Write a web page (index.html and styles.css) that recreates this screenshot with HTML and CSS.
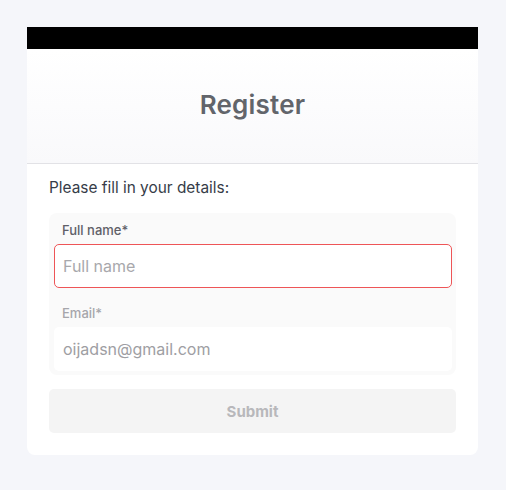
FILE: index.html
```html
<!DOCTYPE html>
<html>
<head>
<meta charset="utf-8">
<link rel="stylesheet" href="styles.css">
</head>
<body>
<div class="page">
  <div class="card">
    <div class="topbar"></div>
    <div class="header"><h1 class="title">Register</h1></div>
    <div class="body">
      <p class="intro">Please fill in your details:</p>
      <div class="group">
        <div class="field">
          <label class="label">Full name*</label>
          <div class="input input-error"><span class="placeholder">Full name</span></div>
        </div>
        <div class="field field-muted">
          <label class="label">Email*</label>
          <div class="input"><span class="value">oijadsn@gmail.com</span></div>
        </div>
      </div>
      <div class="submit">Submit</div>
    </div>
  </div>
</div>
</body>
</html>
```
FILE: styles.css
```css
* { box-sizing: border-box; }
html, body { margin: 0; padding: 0; }
body {
  background: #f5f6fa;
  font-family: Inter, "Liberation Sans", sans-serif;
  width: 506px;
  height: 490px;
}
.page { padding: 27px 28px 0 27px; }
.card {
  width: 451px;
  background: #ffffff;
  border-radius: 0 0 8px 8px;
  overflow: hidden;
}
.topbar { height: 22px; background: #000000; }
.header {
  height: 115px;
  background: linear-gradient(#ffffff, #f9f9fb);
  border-bottom: 1px solid #e2e2e6;
  display: flex;
  align-items: center;
  justify-content: center;
}
.title {
  margin: 0 0 3px 0;
  font-size: 26px;
  font-weight: 600;
  color: #62656b;
  letter-spacing: 0.2px;
}
.body { padding: 14px 22px 22px 22px; }
.intro {
  margin: 0 0 15px 0;
  font-size: 15.4px;
  color: #363c48;
  line-height: 20px;
}
.group {
  background: #fafafa;
  border-radius: 8px;
  padding: 8px 4px 4px 5px;
}
.field { display: flex; flex-direction: column; }
.field + .field { margin-top: 16px; }
.label {
  font-size: 13px;
  font-weight: 500;
  color: #606068;
  padding-left: 8px;
  line-height: 18px;
  margin-bottom: 5px;
}
.field-muted .label { color: #a6a6ab; }
.input {
  height: 44px;
  background: #ffffff;
  border-radius: 5px;
  display: flex;
  align-items: center;
  padding-left: 9px;
  font-size: 16px;
}
.input-error { border: 1px solid #ee5557; padding-left: 8px; }
.placeholder { color: #a8a8ac; }
.value { color: #9e9ea3; }
.submit {
  margin-top: 14px;
  height: 44px;
  background: #f4f4f4;
  border-radius: 5px;
  display: flex;
  align-items: center;
  justify-content: center;
  font-size: 15px;
  font-weight: 700;
  color: #b8b8bb;
}
```
